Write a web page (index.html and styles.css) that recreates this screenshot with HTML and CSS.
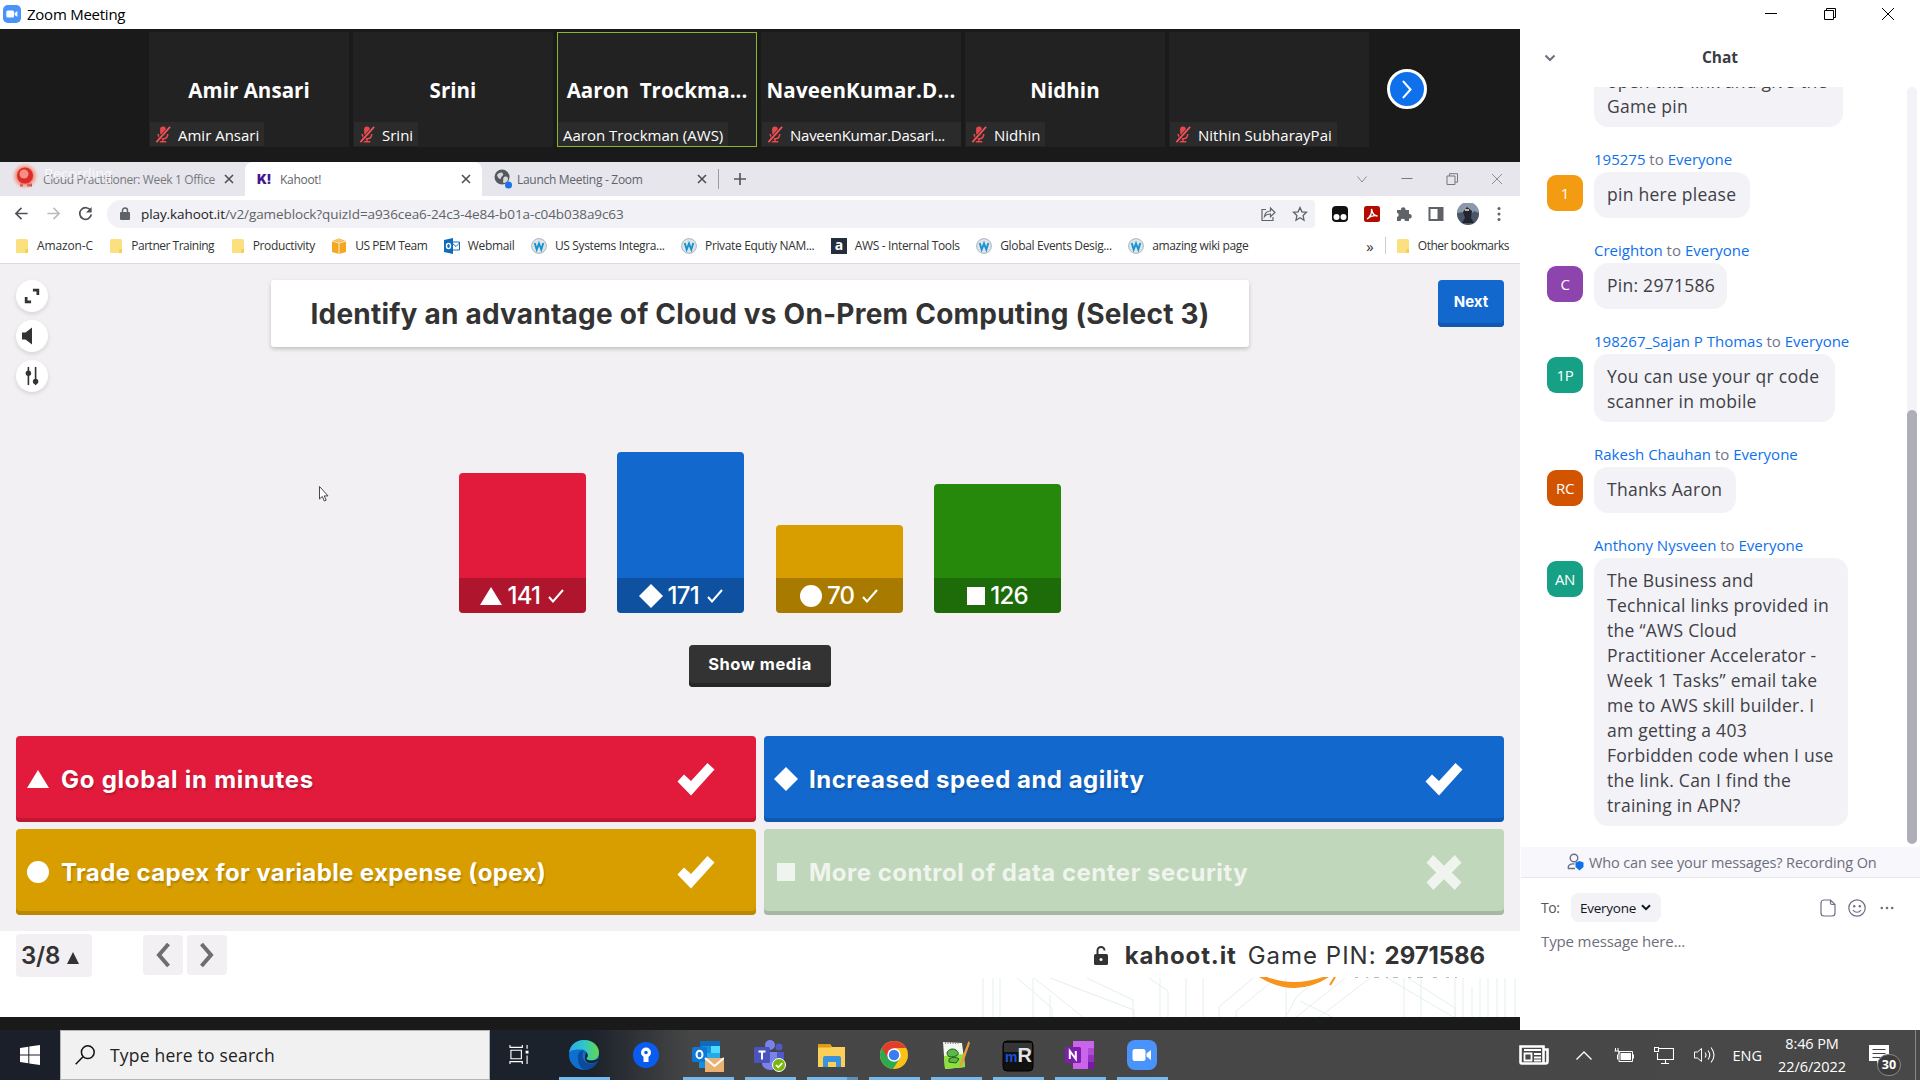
FILE: index.html
```html
<!DOCTYPE html>
<html lang="en">
<head>
<meta charset="utf-8">
<title>Zoom Meeting</title>
<link rel="stylesheet" href="styles.css">
</head>
<body>
<svg class="defs" aria-hidden="true">
  <defs>
    <symbol id="i-zoom" viewBox="0 0 30 30"><rect width="30" height="30" rx="8" fill="#4a93fb"/><rect x="5.500" y="9" width="13" height="12" rx="2.500" fill="#fff"/><path d="M19.500 13.500l4.500-3.500v10l-4.500-3.500z" fill="#fff"/></symbol>
    <symbol id="i-muted" viewBox="0 0 16 18"><rect x="5" y="0.500" width="6" height="10" rx="3" fill="#e8484b"/><path d="M3 8.500c0 3.500 2 5 5 5s5-1.500 5-5M8 13.500V16M4.500 16.700h7" fill="none" stroke="#e8484b" stroke-width="1.700"/><path d="M1 17L15.500 1" stroke="#2b2b2b" stroke-width="3.500"/><path d="M1 17L15.500 1" stroke="#ef5558" stroke-width="1.900"/></symbol>
    <symbol id="i-close" viewBox="0 0 12 12"><path d="M2 2l8 8M10 2l-8 8" stroke="currentColor" stroke-width="1.600" fill="none"/></symbol>
    <symbol id="i-folder" viewBox="0 0 14 16"><path d="M1 2.500A1.500 1.500 0 0 1 2.500 1h9A1.500 1.500 0 0 1 13 2.500V13l-1 2H1z" fill="#fbe080"/><path d="M10 15l.5-4H13v4z" fill="#f3cf57"/></symbol>
    <symbol id="i-wiki" viewBox="0 0 16 16"><circle cx="8" cy="8" r="7.400" fill="#dfe5e8" stroke="#a9b6bd"/><path d="M3.700 5l2 6.500L8 5.500l2.300 6L12.300 5" fill="none" stroke="#1793d1" stroke-width="1.900"/></symbol>
    <symbol id="i-check" viewBox="0 0 38 34"><path d="M0.500 19.500L7 12.500l7 6.500L30.500 1l7 6.500L14 33.500z" fill="#fff"/></symbol>
    <symbol id="i-tick" viewBox="0 0 16 14"><path d="M1 8l4 4.500L15 1" fill="none" stroke="#fff" stroke-width="2"/></symbol>
    <symbol id="i-triangle" viewBox="0 0 22 18"><path d="M11 0l11 18H0z" fill="#fff"/></symbol>
    <symbol id="i-diamond" viewBox="0 0 24 24"><path d="M12 0l12 12-12 12L0 12z" fill="#fff"/></symbol>
    <symbol id="i-circle" viewBox="0 0 22 22"><circle cx="11" cy="11" r="11" fill="#fff"/></symbol>
    <symbol id="i-square" viewBox="0 0 18 18"><path d="M0 0h18v18H0z" fill="#fff"/></symbol>
  </defs>
</svg>

<div class="screen">
  <header class="titlebar">
    <svg class="titlebar-logo"><use href="#i-zoom"/></svg>
    <span class="titlebar-text">Zoom Meeting</span>
    <div class="window-controls">
      <svg viewBox="0 0 12 12"><path d="M0 5.500h12" stroke="#000" fill="none"/></svg>
      <svg viewBox="0 0 12 12"><path d="M.5 2.500h9v9h-9zM2.500 2.500v-2h9v9h-2" stroke="#000" fill="none"/></svg>
      <svg viewBox="0 0 12 12"><path d="M0 0l12 12M12 0L0 12" stroke="#000" fill="none"/></svg>
    </div>
  </header>

  <div class="workspace">
    <main class="meeting">
      <section class="gallery">
        <div class="tile"><span class="tile-name">Amir Ansari</span><span class="tile-label"><svg><use href="#i-muted"/></svg><span>Amir Ansari</span></span></div>
        <div class="tile"><span class="tile-name">Srini</span><span class="tile-label"><svg><use href="#i-muted"/></svg><span>Srini</span></span></div>
        <div class="tile tile-active"><span class="tile-name">Aaron&nbsp; Trockma...</span><span class="tile-label"><span>Aaron Trockman (AWS)</span></span></div>
        <div class="tile"><span class="tile-name tile-name-long">NaveenKumar.D...</span><span class="tile-label tile-label-wide"><svg><use href="#i-muted"/></svg><span>NaveenKumar.Dasari...</span></span></div>
        <div class="tile"><span class="tile-name">Nidhin</span><span class="tile-label"><svg><use href="#i-muted"/></svg><span>Nidhin</span></span></div>
        <div class="tile"><span class="tile-label"><svg><use href="#i-muted"/></svg><span>Nithin SubharayPai</span></span></div>
        <button class="gallery-next"><svg viewBox="0 0 16 24"><path d="M4 3l8 9-8 9" fill="none" stroke="#fff" stroke-width="2.400" stroke-linecap="round"/></svg></button>
      </section>

      <section class="browser">
        <div class="tabs">
          <div class="tab tab-first">
            <svg class="rec-dot" viewBox="0 0 30 30"><defs><radialGradient id="glow"><stop offset=".5" stop-color="#f26a50"/><stop offset="1" stop-color="#f9c5b8" stop-opacity="0"/></radialGradient></defs><path d="M10 23h3m4 0h5" stroke="#a32334" stroke-width="3"/><circle cx="15" cy="14" r="14" fill="url(#glow)"/><circle cx="15" cy="13.500" r="8" fill="#dc2b2b"/><circle cx="14" cy="12" r="4.500" fill="#f49080"/></svg>
            <span class="tab-title">Cloud Practitioner: Week 1 Office</span>
            <span class="rec-text">Recording</span>
            <svg class="tab-close"><use href="#i-close"/></svg>
          </div>
          <div class="tab tab-current">
            <span class="k-logo">K!</span>
            <span class="tab-title">Kahoot!</span>
            <svg class="tab-close"><use href="#i-close"/></svg>
          </div>
          <div class="tab tab-last">
            <svg class="globe" viewBox="0 0 18 20"><circle cx="8" cy="8" r="7.500" fill="#55585c"/><path d="M3 6c3-3 5-3 6-1s-2 2-2 4-3 1-4-3zM10 8c3-1 4 0 4 2s-2 4-4 4 0-3-1-4z" fill="#d5d7da"/><circle cx="14.500" cy="16" r="3.500" fill="#1a73e8"/></svg>
            <span class="tab-title">Launch Meeting - Zoom</span>
            <svg class="tab-close"><use href="#i-close"/></svg>
          </div>
          <svg class="tab-add" viewBox="0 0 14 14"><path d="M7 1v12M1 7h12" stroke="#55585c" stroke-width="1.700"/></svg>
          <div class="browser-controls">
            <svg viewBox="0 0 12 12"><path d="M1.500 3.500L6 9l4.500-5.500" stroke="#8d8d93" fill="none"/></svg>
            <svg viewBox="0 0 12 12"><path d="M.5 5.500h11" stroke="#77777d" fill="none"/></svg>
            <svg viewBox="0 0 12 12"><path d="M1 3h8v8.500H1zM3.500 3V.700h8v8.500H9" stroke="#77777d" fill="none"/></svg>
            <svg viewBox="0 0 12 12"><path d="M1 1l10 10M11 1L1 11" stroke="#8d8d93" fill="none"/></svg>
          </div>
        </div>

        <div class="toolbar">
          <svg class="nav-icon" viewBox="0 0 16 16"><path d="M14.500 8H2M8 2L2 8l6 6" fill="none" stroke="#4d5054" stroke-width="1.700"/></svg>
          <svg class="nav-icon" viewBox="0 0 16 16"><path d="M1.500 8H14M8 2l6 6-6 6" fill="none" stroke="#b9bbbf" stroke-width="1.700"/></svg>
          <svg class="nav-icon" viewBox="0 0 16 16"><path d="M13.500 5A6.200 6.200 0 1 0 14.200 9" fill="none" stroke="#4d5054" stroke-width="1.800"/><path d="M14.500 1v6h-6z" fill="#4d5054"/></svg>
          <div class="omnibox">
            <svg class="lock" viewBox="0 0 10 13"><rect y="5" width="10" height="8" rx="1" fill="#5f6368"/><path d="M2.500 5V3.500a2.500 2.500 0 0 1 5 0V5" fill="none" stroke="#5f6368" stroke-width="1.500"/></svg>
            <span class="url"><b>play.kahoot.it</b>/v2/gameblock?quizId=a936cea6-24c3-4e84-b01a-c04b038a9c63</span>
            <svg class="omni-icon" viewBox="0 0 16 16"><path d="M6 3.500H2v11h11V11M4.500 10.500c.5-4 3-5.500 6-5.500V2l4.500 4.500-4.500 4.300V8c-2.500 0-4.500.5-6 2.500z" fill="none" stroke="#5f6368" stroke-width="1.200"/></svg>
            <svg class="omni-icon" viewBox="0 0 16 16"><path d="M8 1.500l1.900 4.300 4.600.5-3.400 3.200.9 4.700L8 11.800l-4 2.400.9-4.700L1.500 6.300l4.600-.5z" fill="none" stroke="#5f6368" stroke-width="1.300"/></svg>
          </div>
          <div class="extensions">
            <svg viewBox="0 0 18 18"><rect x="1" y="1" width="16" height="16" rx="4" fill="#111"/><circle cx="5.500" cy="12" r="3" fill="#fff"/><circle cx="12.500" cy="12" r="3" fill="#fff"/></svg>
            <svg viewBox="0 0 18 18"><rect x="1" y="1" width="16" height="16" rx="2.500" fill="#b30b00"/><path d="M4 14c3-2 5-6 4.500-10 1 5 3 7 6 7-4-1-7 0-10.500 3z" fill="none" stroke="#fff" stroke-width="1.300"/></svg>
            <svg viewBox="0 0 18 18"><path d="M2 5h4a2.300 2.300 0 1 1 4.500 0H14v4a2.300 2.300 0 1 1 0 4.500V16h-4a2.200 2.200 0 0 0-4.400 0H2v-4a2.200 2.200 0 0 0 0-4.300z" fill="#5f6368"/></svg>
            <svg viewBox="0 0 18 18"><path d="M2.500 3h13v12h-13z" fill="none" stroke="#5f6368" stroke-width="2"/><path d="M10.500 3h5v12h-5z" fill="#5f6368"/></svg>
            <svg class="avatar-photo" viewBox="0 0 22 22"><circle cx="11" cy="11" r="11" fill="#4a5568"/><path d="M0 10a11 11 0 0 1 22 0l-5-2-4 4-6-3z" fill="#8c99ad"/><path d="M6 9l4-5 5 4-1 7 3 5H5l3-5z" fill="#20242e"/><path d="M8 6h4v2H8z" fill="#c8b49a"/></svg>
            <svg viewBox="0 0 18 18"><circle cx="9" cy="3.500" r="1.500" fill="#5f6368"/><circle cx="9" cy="9" r="1.500" fill="#5f6368"/><circle cx="9" cy="14.500" r="1.500" fill="#5f6368"/></svg>
          </div>
        </div>

        <div class="bookmarks">
          <span class="bm bm-f bm-loose"><svg><use href="#i-folder"/></svg><span>Amazon-C</span></span>
          <span class="bm bm-f bm-tight"><svg><use href="#i-folder"/></svg><span>Partner Training</span></span>
          <span class="bm bm-f"><svg><use href="#i-folder"/></svg><span>Productivity</span></span>
          <span class="bm bm-tight"><svg viewBox="0 0 16 16"><path d="M1 3l7-2.500L15 3v11l-7 2-7-2z" fill="#f5a623"/><path d="M1 3l7 2 7-2M8 5v11" stroke="#fff" fill="none" stroke-width=".8"/><path d="M3 2.500l5-2 5 2-5 1.500z" fill="#f9c66a"/></svg><span>US PEM Team</span></span>
          <span class="bm"><svg viewBox="0 0 16 16"><path d="M8 4h7.500v8H8zM8 5l4 3.500L15.500 5" fill="#fff" stroke="#0f6cbd"/><path d="M0 2l9-2v16l-9-2z" fill="#0f6cbd"/><ellipse cx="4.500" cy="8" rx="2" ry="2.600" fill="none" stroke="#fff" stroke-width="1.400"/></svg><span>Webmail</span></span>
          <span class="bm"><svg><use href="#i-wiki"/></svg><span>US Systems Integra...</span></span>
          <span class="bm"><svg><use href="#i-wiki"/></svg><span>Private Equtiy NAM...</span></span>
          <span class="bm"><span class="a-logo">a</span><span>AWS - Internal Tools</span></span>
          <span class="bm"><svg><use href="#i-wiki"/></svg><span>Global Events Desig...</span></span>
          <span class="bm"><svg><use href="#i-wiki"/></svg><span>amazing wiki page</span></span>
          <span class="bm-more">»</span>
          <span class="bm bm-f bm-tight bm-other"><svg><use href="#i-folder"/></svg><span>Other bookmarks</span></span>
        </div>

        <div class="kahoot">
          <div class="k-top">
            <div class="k-tools">
              <button><svg viewBox="0 0 20 20"><path d="M11 3.500h5.500V9M9 16.500H3.500V11" fill="none" stroke="#333" stroke-width="3"/></svg></button>
              <button><svg class="k-sound" viewBox="0 0 20 20"><path d="M0 6.500h3.500L10 1.500v17l-6.500-5H0z" fill="#333"/></svg></button>
              <button><svg viewBox="0 0 20 20"><path d="M6 0v20M14 0v20" stroke="#333" stroke-width="1.800"/><circle cx="6" cy="7" r="3" fill="#333"/><circle cx="14" cy="16" r="3" fill="#333"/></svg></button>
            </div>
            <h1 class="question">Identify an advantage of Cloud vs On-Prem Computing (Select 3)</h1>
            <button class="next-btn">Next</button>
          </div>
          <div class="chart">
            <svg class="cursor" viewBox="0 0 10 16"><path d="M.5.500v12.500l2.800-2.500 2 4.500 1.900-.9-2-4.200h3.800z" fill="#fff" stroke="#333" stroke-width=".9"/></svg>
            <div class="bar red" style="height:140px"><div class="bar-foot"><svg class="s-tri"><use href="#i-triangle"/></svg><span>141</span><svg class="s-tick"><use href="#i-tick"/></svg></div></div>
            <div class="bar blue" style="height:161px"><div class="bar-foot"><svg class="s-dia"><use href="#i-diamond"/></svg><span>171</span><svg class="s-tick"><use href="#i-tick"/></svg></div></div>
            <div class="bar yellow" style="height:88px"><div class="bar-foot"><svg class="s-cir"><use href="#i-circle"/></svg><span>70</span><svg class="s-tick"><use href="#i-tick"/></svg></div></div>
            <div class="bar green" style="height:129px"><div class="bar-foot"><svg class="s-sq"><use href="#i-square"/></svg><span>126</span></div></div>
          </div>
          <div class="media-row"><button class="media-btn">Show media</button></div>
          <div class="answers">
            <div class="answer red"><svg class="shape s-tri"><use href="#i-triangle"/></svg><span class="answer-wide">Go global in minutes</span><svg class="mark"><use href="#i-check"/></svg></div>
            <div class="answer blue"><svg class="shape s-dia"><use href="#i-diamond"/></svg><span>Increased speed and agility</span><svg class="mark"><use href="#i-check"/></svg></div>
            <div class="answer yellow"><svg class="shape s-cir"><use href="#i-circle"/></svg><span class="answer-narrow">Trade capex for variable expense (opex)</span><svg class="mark"><use href="#i-check"/></svg></div>
            <div class="answer faded"><svg class="shape s-sq"><use href="#i-square"/></svg><span>More control of data center security</span><svg class="mark mark-cross" viewBox="0 0 38 38"><path d="M8 1l11 11L30 1l7 8-10 10 10 10-7 8-11-11L8 37l-7-8 10-10L1 9z" fill="#fff"/></svg></div>
          </div>
        </div>

        <footer class="k-footer">
          <div class="k-count"><span>3/8</span><svg viewBox="0 0 12 12"><path d="M6 0l6 12H0z" fill="#333"/></svg></div>
          <div class="k-nav"><svg viewBox="0 0 16 26"><path d="M13.500 2L4 13l9.500 11" fill="none" stroke="#6e6e6e" stroke-width="4"/></svg></div>
          <div class="k-nav"><svg viewBox="0 0 16 26"><path d="M2.500 2L12 13 2.500 24" fill="none" stroke="#6e6e6e" stroke-width="4"/></svg></div>
          <div class="k-pin">
            <svg viewBox="0 0 14 19"><rect y="8" width="14" height="11" rx="1.500" fill="#333"/><path d="M3.500 8V4.500a3.500 3.500 0 0 1 7 0" fill="none" stroke="#333" stroke-width="2"/><circle cx="7" cy="13.500" r="1.500" fill="#fff"/></svg>
            <b class="pin-site">kahoot.it</b><span class="pin-label">Game PIN:</span><b>2971586</b>
          </div>
        </footer>
        <svg class="slide-edge" viewBox="0 0 1520 40">
          <g fill="none" stroke="#e4efef"><path d="M983 1v40M993 1v40M1000 1v40M1017 1l35 30v10M1033 1v40M1050 18v23M1034 1l50 40M1050 1l84 32v8M1087 1l46 22v18M1149 1l19 13v27M1160 1v40M1186 1v40M1203 1v40M1219 41V30l34-29M1236 41V34l40-33M1286 1v40M1285 41l12-22 23-18M1345 1l-50 40M1370 1l-52 40M1387 1l68 40M1300 24l34 17M1408 1l47 30v10M1404 1v40M1421 1v40M1455 1v40M1463 1v40M1472 10v31M1480 1v40M1488 1v40M1497 1v40M1505 1v40M1515 1v40"/></g>
          <path d="M1259 0q36 22 70 0l-6 0q-30 10-56 0z" fill="#f7941e"/><path d="M1330 8l5-8" stroke="#f7941e" stroke-width="2"/>
          <path d="M1355 .5h3m8 0h2m6 0h5m7 0h2m5 0h5m10 0h3m6 0h6m10 0h4m9 0h3m6 0h2" stroke="#b9b9be"/>
        </svg>
      </section>
    </main>

    <aside class="chat">
      <div class="chat-head"><svg viewBox="0 0 12 8"><path d="M1.500 1.500L6 6l4.500-4.500" fill="none" stroke="#6e6e85" stroke-width="2"/></svg><span>Chat</span></div>
      <div class="chat-scroll">
        <div class="messages">
          <div class="msg msg-cut"><div class="bubble" style="width:249px">open this link and give the<br>Game pin</div></div>
          <div class="msg"><div class="from">195275 <i>to</i> Everyone</div><div class="ava orange">1</div><div class="bubble" style="width:156px">pin here please</div></div>
          <div class="msg"><div class="from">Creighton <i>to</i> Everyone</div><div class="ava purple">C</div><div class="bubble" style="width:133px">Pin: 2971586</div></div>
          <div class="msg"><div class="from">198267_Sajan P Thomas <i>to</i> Everyone</div><div class="ava teal">1P</div><div class="bubble" style="width:241px">You can use your qr code<br>scanner in mobile</div></div>
          <div class="msg"><div class="from">Rakesh Chauhan <i>to</i> Everyone</div><div class="ava rust">RC</div><div class="bubble" style="width:142px">Thanks Aaron</div></div>
          <div class="msg"><div class="from">Anthony Nysveen <i>to</i> Everyone</div><div class="ava teal">AN</div><div class="bubble" style="width:254px">The Business and<br>Technical links provided in<br>the “AWS Cloud<br>Practitioner Accelerator -<br>Week 1 Tasks” email take<br>me to AWS skill builder. I<br>am getting a 403<br>Forbidden code when I use<br>the link. Can I find the<br>training in APN?</div></div>
        </div>
        <div class="track"><div class="thumb"></div></div>
      </div>
      <div class="who"><svg viewBox="0 0 17 18"><circle cx="7" cy="5" r="3.800" fill="none" stroke="#6e6e85" stroke-width="1.400"/><path d="M8 15.500H1.500c-1-3 1.500-5 6-4.500" fill="none" stroke="#6e6e85" stroke-width="1.400"/><path d="M12.500 8l4 1.500v4.500l-4 3.500-4-3.500V9.500z" fill="#0e71eb"/></svg><span>Who can see your messages? Recording On</span></div>
      <div class="compose">
        <div class="to-row"><span class="to-label">To:</span><span class="to-pill"><span>Everyone</span><svg viewBox="0 0 10 7"><path d="M1 1.200l4 4 4-4" fill="none" stroke="#131619" stroke-width="2"/></svg></span>
          <svg class="c-file" viewBox="0 0 16 18"><path d="M10.500 1H4a3 3 0 0 0-3 3v10a3 3 0 0 0 3 3h8a3 3 0 0 0 3-3V5.500zM10.500 1v3a1.500 1.500 0 0 0 1.500 1.500h3" fill="none" stroke="#6e6e85" stroke-width="1.200"/></svg>
          <svg class="c-smile" viewBox="0 0 18 18"><circle cx="9" cy="9" r="8.200" fill="none" stroke="#6e6e85" stroke-width="1.200"/><circle cx="6.200" cy="7.300" r="1.200" fill="#6e6e85"/><circle cx="11.800" cy="7.300" r="1.200" fill="#6e6e85"/><path d="M5 11c2 3 6 3 8 0" fill="none" stroke="#6e6e85" stroke-width="1.200"/></svg>
          <svg class="c-dots" viewBox="0 0 14 4"><circle cx="1.800" cy="2" r="1.300" fill="#6e6e85"/><circle cx="7" cy="2" r="1.300" fill="#6e6e85"/><circle cx="12.200" cy="2" r="1.300" fill="#6e6e85"/></svg></div>
        <div class="placeholder">Type message here...</div>
      </div>
    </aside>
  </div>

  <footer class="taskbar">
    <div class="start"><svg viewBox="0 0 20 20"><path d="M0 3l8.300-1.200v7.700H0zM9.300 1.600L20 0v9.500H9.300zM0 10.500h8.300v7.800L0 17zM9.300 10.500H20V20L9.300 18.400z" fill="#fff"/></svg></div>
    <div class="search"><svg viewBox="0 0 20 20"><circle cx="12.800" cy="7.200" r="6.400" fill="none" stroke="#111" stroke-width="1.500"/><path d="M8 11.800L.7 19.300" stroke="#111" stroke-width="1.500"/></svg><span>Type here to search</span></div>
    <div class="taskview"><svg viewBox="0 0 20 20"><path d="M1.500 5.500h11v9h-11zM.5 0v2.500h13V0M.5 20v-2.500h13V20M18.500 0v4M18.500 11v9" fill="none" stroke="#fff" stroke-width="1.200"/><path d="M17 6h3v3h-3z" fill="#fff"/></svg></div>
    <div class="apps">
      <div class="app run"><svg viewBox="0 0 30 30"><defs><linearGradient id="ed" x1="0" x2="1"><stop stop-color="#2ba8ec"/><stop offset=".5" stop-color="#2fc7c9"/><stop offset="1" stop-color="#62d94a"/></linearGradient></defs><circle cx="15" cy="15" r="15" fill="#0f6fd0"/><path d="M0 13C1 5 7 0 15 0c9 0 15 6 15 12.500 0 5-4 8-8 8-3 0-5-1-5-2.500 2-2 2-8-4-8.500C7 9 1 10 0 13z" fill="url(#ed)"/><path d="M9 19c-1-6 4-9.500 6-8.500-3 3-2 12 5 13 4 .5 7-1 8-2C25 28 20 30 16 30c-4-1-7-6-7-11z" fill="#0c4a9a"/><path d="M17 12c3 3 2 5 .3 6.200.7 2.300 4 2.300 6 2.200 3 0 5.500-1.200 6.400-3-.3 2-.7 3-1.700 4-5 3-13 2-12-5z" fill="#1b222c"/></svg></div>
      <div class="app"><svg viewBox="0 0 30 30"><circle cx="15" cy="15" r="13" fill="#0a5cf0"/><circle cx="15" cy="12.500" r="5" fill="#fff"/><path d="M12.500 15h5v7h-5z" fill="#fff"/><circle cx="15" cy="12.500" r="1.800" fill="#0a5cf0"/></svg></div>
      <div class="app run"><svg class="wide" viewBox="0 0 32 32"><path d="M8 1h20v18H8z" fill="#0f6cbd"/><path d="M10 6h9v7h-9z" fill="#1490df"/><path d="M19 6h9v7h-9z" fill="#50d9ff"/><path d="M8 13h20v10H8z" fill="#28a8ea"/><path d="M7 19h14v9H7z" fill="#1490df"/><rect y="7" width="15" height="15" rx="1.500" fill="#0f78d4"/><ellipse cx="7.500" cy="14.500" rx="3" ry="3.700" fill="none" stroke="#fff" stroke-width="2"/><path d="M13 18h19v14H13z" fill="#e8b272"/><path d="M13 18l9.500 8L32 18" stroke="#fff" stroke-width="2" fill="none"/></svg></div>
      <div class="app run"><svg class="wide" viewBox="0 0 32 32"><circle cx="16" cy="5" r="5" fill="#7b83eb"/><circle cx="25" cy="7" r="3.500" fill="#5059c9"/><path d="M20 12h10v9c0 4-3 6-6 6z" fill="#5059c9"/><path d="M8 12h15v11c0 5-3 7-7 7s-8-3-8-7z" fill="#7b83eb"/><rect y="7" width="16" height="16" rx="1.500" fill="#4b53bc"/><path d="M4.500 11.500h7M8 11.500v8" stroke="#fff" stroke-width="2"/><circle cx="25" cy="25" r="6.500" fill="#78b80c" stroke="#fff"/><path d="M22 25l2.300 2.300L28.300 23" stroke="#fff" stroke-width="1.700" fill="none"/></svg></div>
      <div class="app run run-split"><svg viewBox="0 0 30 30"><path d="M1 4h12l2 3h13v20H1z" fill="#fccf58"/><path d="M1 4h11.500l2 3.500H1z" fill="#e09a10"/><path d="M6 27V18a2 2 0 0 1 2-2h14a2 2 0 0 1 2 2v9h-5v-5h-8v5z" fill="#3a92dc"/></svg></div>
      <div class="app run"><svg viewBox="0 0 30 30"><circle cx="15" cy="15" r="14" fill="#fbc116"/><path d="M15 15L2.900 8A14 14 0 0 0 14 29l7-11z" fill="#2da94f"/><path d="M2.900 8A14 14 0 0 1 27.100 8H15L8.900 18z" fill="#e33b2e"/><circle cx="15" cy="15" r="6.700" fill="#fff"/><circle cx="15" cy="15" r="5.200" fill="#3b7df0"/></svg></div>
      <div class="app run"><svg viewBox="0 0 30 30"><path d="M2 2l19 1 3 24-20 2z" fill="#f4f6f0"/><path d="M3 16l20-2 1 13-20 2z" fill="#8ee03a"/><path d="M6 13c1-4 6-5 9-3s3 5 0 6-9 2-9-3zM8 19c3-2 8-2 10 0l-3 4-7-1z" fill="#5cb84a" stroke="#25581e"/><path d="M27.500 1L18 26l3 0L29 3z" fill="#e9a23b"/><path d="M4 3h15" stroke="#888" stroke-width="2" stroke-dasharray="1 1.500"/></svg></div>
      <div class="app run"><svg class="wide" viewBox="0 0 32 32"><rect x="1" y="1" width="30" height="30" rx="4" fill="#111" stroke="#000"/><path d="M2 3h28v9H2z" fill="#353535"/><text x="3" y="22" class="mr-m">m</text><text x="15.500" y="22" class="mr-r">R</text></svg></div>
      <div class="app run"><svg viewBox="0 0 30 30"><path d="M8 1h21v28H8z" fill="#ca64ea"/><path d="M23 8h6v7h-6z" fill="#ae4bd5"/><path d="M23 15h6v7h-6z" fill="#9332bf"/><path d="M23 22h6v7h-6z" fill="#7719aa"/><rect y="7" width="16" height="16" rx="1.500" fill="#7f1dae"/><path d="M4.800 19v-8l6 8v-8" stroke="#fff" stroke-width="2" fill="none"/></svg></div>
      <div class="app run"><svg viewBox="0 0 30 30"><use href="#i-zoom"/></svg></div>
    </div>
    <div class="tray">
      <svg class="t-news" viewBox="0 0 30 20"><path d="M1.500 1.500h23v17h-22q-1 0-1-1zM24.500 4.500h4v12q0 2-2 2h-4" fill="none" stroke="#fff" stroke-width="2.600"/><path d="M5.500 8.500h7v7h-7zM5 5h17M15 9h7M15 12.500h7M15 15.500h7" fill="none" stroke="#fff" stroke-width="1.800"/></svg>
      <svg class="t-up" viewBox="0 0 16 9"><path d="M.5 8.500L8 1l7.500 7.500" fill="none" stroke="#fff" stroke-width="1.300"/></svg>
      <svg class="t-bat" viewBox="0 0 20 14"><path d="M5 3.500h13.500v10H5z" fill="none" stroke="#fff"/><path d="M6.500 5h10.500v7H6.500zM18.500 6.500H20v4h-1.500z" fill="#fff"/><path d="M1.500 0v3M4 0v3M.5 3h4.500v2.500L3.500 7v4.500" fill="none" stroke="#fff"/></svg>
      <svg class="t-mon" viewBox="0 0 20 17"><path d="M5 1.500h14.500v11H3.500V6M.5.500h4v4h-4zM11.500 12.500v3.500M7 16.500h8" fill="none" stroke="#fff" stroke-width="1.100"/></svg>
      <svg class="t-vol" viewBox="0 0 21 18"><path d="M.5 6h3L7.500 2.500v13L3.500 12h-3z" fill="none" stroke="#fff"/><path d="M11 6.500q2 2.500 0 5M14 4.500q3.500 4.500 0 9M17 1.500q6 7.500 0 15" fill="none" stroke="#fff" stroke-width="1.100"/></svg>
      <span class="t-eng">ENG</span>
      <span class="t-clock"><span>8:46 PM</span><span>22/6/2022</span></span>
      <span class="t-note"><svg viewBox="0 0 20 18"><path d="M0 0h20v16h-8l-4 4V16H0z" fill="#fff"/><path d="M3.500 4.500h13M3.500 8.500h13M3.500 12.500h8" stroke="#444"/></svg><b>30</b></span>
    </div>
  </footer>
</div>
</body>
</html>
```
FILE: styles.css
```css
* { box-sizing: border-box; }
body { margin: 0; font-family: "Open Sans", "Noto Sans", sans-serif; color: #222; overflow: hidden; }
button { border: 0; padding: 0; font: inherit; }
svg { display: block; flex: none; }
.defs { position: absolute; width: 0; height: 0; }
.screen { width: 1920px; height: 1080px; display: flex; flex-direction: column; background: #fff; }

.titlebar { height: 29px; display: flex; align-items: center; padding: 0 26px 2px 3px; }
.titlebar-logo { width: 18px; height: 18px; }
.titlebar-text { margin-left: 6px; font-size: 15px; letter-spacing: -.25px; color: #000; }
.window-controls { margin-left: auto; display: flex; gap: 46.500px; }
.window-controls svg { width: 12px; height: 12px; }

.workspace { height: 1001px; display: flex; }
.meeting { width: 1520px; background: #1a1a1a; }

.gallery { height: 133px; padding: 3px 0 0 149px; display: flex; gap: 4px; }
.tile { width: 200px; height: 115px; background: #222; display: flex; position: relative; justify-content: center; align-items: center; border: 1px solid transparent; }
.tile-active { border-color: #86b82b; }
.tile-name { color: #fff; font-weight: 700; font-size: 20.500px; letter-spacing: .05px; white-space: nowrap; }
.tile-name-long { letter-spacing: .2px; }
.tile-label { position: absolute; left: 0; bottom: 0; height: 24px; padding: 1px 5px 0; display: flex; align-items: center; background: #2b2b2b; color: #fff; font-size: 15px; white-space: nowrap; }
.tile-label svg { width: 16px; height: 17px; margin-right: 7px; }
.tile-label-wide { width: 199px; letter-spacing: -.25px; }
.gallery-next { width: 40px; height: 40px; margin: 37px 0 0 14px; border-radius: 50%; border: 3px solid #fff; background: #0e71eb; display: grid; place-items: center; }
.gallery-next svg { width: 14px; height: 21px; }

.tabs { height: 34px; background: #e7e6ed; display: flex; align-items: center; color: #5f6368; font-size: 12px; letter-spacing: -.3px; }
.tab { height: 34px; display: flex; align-items: center; position: relative; white-space: nowrap; }
.tab-close { width: 12px; height: 12px; margin-left: auto; color: #4d5054; }
.tab-first { width: 245px; padding: 0 10px; }
.tab-first .tab-title { margin-left: 3px; color: #77797e; letter-spacing: -.37px; }
.rec-dot { width: 30px; height: 30px; margin-top: -4px; }
.rec-text { position: absolute; left: 44px; top: 1px; font-size: 15px; letter-spacing: -.3px; color: #fff; opacity: .75; }
.tab-current { width: 237px; padding: 0 10px 0 12px; background: #fff; border-radius: 8px 8px 0 0; }
.k-logo { width: 16px; font: 900 13px/16px Inter, sans-serif; color: #46178f; }
.tab-current .tab-title { margin-left: 7px; }
.tab-last { width: 237px; padding: 0 10px 0 12px; border-right: 1px solid #9b9ba1; height: 20px; }
.globe { width: 18px; height: 20px; }
.tab-last .tab-title { margin-left: 5px; }
.tab-add { width: 14px; height: 14px; margin-left: 14px; }
.browser-controls { margin-left: auto; padding-right: 17px; display: flex; gap: 33px; }
.browser-controls svg { width: 12px; height: 12px; }

.toolbar { height: 36px; background: #fff; display: flex; align-items: center; padding: 0 0 1px 14px; }
.nav-icon { width: 15px; height: 15px; margin-right: 17px; }
.omnibox { width: 1208px; height: 28px; margin-left: -3px; border-radius: 14px 4px 4px 14px; background: #f1f1f6; display: flex; align-items: center; padding: 0 7px 0 13px; }
.lock { width: 10px; height: 13px; margin-right: 11px; }
.url { font-size: 13.500px; letter-spacing: -.09px; color: #5f6368; margin-right: auto; white-space: nowrap; }
.url b { font-weight: 400; color: #202124; }
.omni-icon { width: 16px; height: 16px; margin-left: 16px; }
.extensions { display: flex; align-items: center; gap: 14px; margin-left: 16px; }
.extensions svg { width: 18px; height: 18px; }
.extensions .avatar-photo { width: 22px; height: 22px; margin: 0 -2px; }
.extensions svg:last-child { margin-left: -1px; }

.bookmarks { height: 32px; background: #fff; border-bottom: 1px solid #dcdce0; display: flex; align-items: center; padding: 0 11px 4px 15px; gap: 16.500px; color: #333; font-size: 12px; letter-spacing: -.35px; white-space: nowrap; }
.bm { display: flex; align-items: center; gap: 8px; }
.bm svg { width: 16px; height: 16px; }
.bm-f svg { width: 14px; }
.bm-loose { letter-spacing: -.15px; }
.bm-tight { letter-spacing: -.49px; }
.a-logo { width: 16px; height: 16px; background: #232f3e; color: #fff; font: 700 14px/14px "Open Sans", sans-serif; text-align: center; }
.bm-more { margin-left: auto; font-size: 15px; }
.bm-other { padding-left: 10px; margin-left: -5px; border-left: 1px solid #ccc; }

.kahoot { height: 667px; background: #f2f0f3; padding: 16px 16px 0; font-family: Inter, "Open Sans", sans-serif; }
.k-top { display: flex; align-items: flex-start; height: 172px; }
.k-tools { width: 255px; display: flex; flex-direction: column; gap: 8px; }
.k-tools button { width: 32px; height: 32px; border-radius: 50%; background: #fff; box-shadow: 0 2px 4px rgba(0,0,0,.12); display: grid; place-items: center; }
.k-tools svg { width: 18px; height: 18px; }
.k-tools .k-sound { width: 20px; height: 20px; }
.question { margin: 0; width: 978px; height: 67px; background: #fff; border-radius: 3px; box-shadow: 0 2px 4px rgba(0,0,0,.2); font-size: 28px; font-weight: 700; letter-spacing: .22px; color: #333; display: grid; place-items: center; white-space: nowrap; }
.next-btn { width: 66px; height: 47px; margin-left: auto; border-radius: 4px; background: #1368ce; box-shadow: inset 0 -4px #1059af; color: #fff; font-size: 15px; font-weight: 700; padding-bottom: 5px; }
.chart { position: relative; height: 161px; display: flex; align-items: flex-end; justify-content: center; gap: 31.400px; }
.cursor { position: absolute; left: 303px; top: 34px; width: 10px; height: 16px; }
.bar { width: 127px; border-radius: 4px; overflow: hidden; display: flex; flex-direction: column; justify-content: flex-end; }
.bar-foot { height: 35px; background: rgba(0,0,0,.22); color: #fff; font-size: 24px; font-weight: 500; letter-spacing: -.7px; display: flex; align-items: center; justify-content: center; gap: 5px; }
.red { background: #e21b3c; }
.blue { background: #1368ce; }
.yellow { background: #d89e00; }
.green { background: #26890c; }
.s-tri { width: 22px; height: 18px; }
.s-dia { width: 24px; height: 24px; }
.s-cir { width: 22px; height: 22px; }
.s-sq { width: 18px; height: 18px; }
.s-tick { width: 16px; height: 14px; margin-left: 3px; }
.media-row { display: flex; justify-content: center; padding-top: 32px; height: 123px; }
.media-btn { width: 142px; height: 42px; border-radius: 4px; background: #333; box-shadow: inset 0 -4px #262626; color: #fff; font-size: 16.500px; font-weight: 700; letter-spacing: .55px; padding-bottom: 5px; }
.answers { display: grid; grid-template-columns: 740px 740px; grid-auto-rows: 86px; gap: 7px 8px; }
.answer { border-radius: 4px; box-shadow: inset 0 -4px rgba(0,0,0,.14); color: #fff; font-size: 24px; font-weight: 700; letter-spacing: .5px; text-shadow: 1px 2px 2px rgba(0,0,0,.2); display: grid; grid-template-columns: 45px 1fr 120px; align-items: center; white-space: nowrap; }
.answer-wide { letter-spacing: .75px; }
.answer-narrow { letter-spacing: .38px; }
.shape { justify-self: center; margin-right: 1px; }
.mark { width: 38px; height: 34px; justify-self: center; }
.mark-cross { height: 37px; }
.faded { background: #c1d7bb; color: rgba(255,255,255,.75); text-shadow: none; }
.faded svg { opacity: .75; }

.k-footer { height: 46px; background: #fff; display: flex; align-items: center; padding: 2px 35px 0 16px; font-family: Inter, sans-serif; color: #333; }
.k-count { width: 76px; height: 43px; background: #f2f0f3; border-radius: 4px; display: flex; align-items: center; gap: 7px; padding-left: 5px; font-size: 24px; font-weight: 600; letter-spacing: -.2px; margin-right: 51px; }
.k-count svg { width: 12px; height: 12px; margin-top: 6px; }
.k-nav { width: 40px; height: 40px; background: #f2f0f3; border-radius: 4px; display: grid; place-items: center; margin-right: 4px; }
.k-nav svg { width: 16px; height: 26px; }
.k-pin { margin-left: auto; display: flex; align-items: center; font-size: 24px; white-space: nowrap; }
.k-pin b { font-weight: 700; letter-spacing: -.1px; }
.k-pin .pin-site { letter-spacing: .85px; }
.k-pin svg { width: 14px; height: 19px; margin-right: 17px; }
.pin-label { margin: 0 8px 0 11px; letter-spacing: 1px; }
.slide-edge { width: 1520px; height: 40px; background: #fff; }

.chat { width: 400px; background: #fff; display: flex; flex-direction: column; }
.chat-head { height: 58px; position: relative; text-align: center; font-weight: 700; font-size: 15.500px; line-height: 57px; color: #3c3c43; }
.chat-head svg { position: absolute; left: 24px; top: 25px; width: 12px; height: 8px; }
.chat-scroll { height: 760px; display: flex; justify-content: space-between; overflow: hidden; }
.messages { padding-left: 26px; color: #3f3f46; font-size: 17.500px; letter-spacing: .26px; line-height: 25px; }
.msg { display: grid; grid-template-columns: 48px auto; grid-template-rows: 24px auto; margin-bottom: 21px; white-space: nowrap; }
.msg-cut { margin-top: -52px; }
.from { grid-column: 2; font-size: 15px; letter-spacing: 0; line-height: 22px; color: #0e71eb; }
.from i { font-style: normal; color: #747487; }
.ava { grid-row: 2; width: 36px; height: 36px; margin: 3px 0 0 1px; border-radius: 9px; color: #fff; font-size: 15px; letter-spacing: -.3px; line-height: 36px; text-align: center; }
.bubble { grid-row: 2; grid-column: 2; min-height: 46px; padding: 10px 13px 8px; border-radius: 14px; background: #f2f2f7; justify-self: start; }
.orange { background: #f39c12; }
.purple { background: #8e44ad; }
.teal { background: #16a085; }
.rust { background: #d35400; }
.track { width: 10px; height: 757px; margin-right: 3px; border-radius: 5px; background: #f2f2f7; padding-top: 323px; }
.thumb { height: 434px; border-radius: 5px; background: #aeaeb8; }
.who { height: 31px; margin-left: 1px; background: #f7f7fc; border-bottom: 1px solid #e6e6ee; display: flex; align-items: center; padding-left: 46px; gap: 5px; font-size: 14.500px; letter-spacing: -.12px; color: #6e6e7c; white-space: nowrap; }
.who svg { width: 17px; height: 18px; }
.compose { padding: 15px 26px 0 21px; font-size: 15px; letter-spacing: -.13px; color: #6e6e7c; }
.to-row { display: flex; align-items: center; height: 29px; color: #555; }
.to-label { width: 18px; font-size: 14px; letter-spacing: -.5px; white-space: nowrap; }
.to-pill { width: 90px; height: 29px; margin: 0 auto 0 12px; border-radius: 8px; background: #f2f2f7; display: flex; align-items: center; gap: 5px; padding-left: 9px; font-size: 13.500px; letter-spacing: -.25px; color: #131619; }
.to-pill svg { width: 10px; height: 7px; }
.c-file { width: 16px; height: 18px; }
.c-smile { width: 18px; height: 18px; margin: 0 14px 0 12px; }
.c-dots { width: 14px; height: 4px; }
.placeholder { margin-top: 8px; line-height: 22px; }

.taskbar { height: 50px; display: flex; color: #fff; background: linear-gradient(90deg, #1b1f29 0, #1c222b 590px, #464646 690px, #484848 100%); }
.start { width: 60px; display: grid; place-items: center; }
.start svg { width: 20px; height: 20px; }
.search { width: 430px; background: #f1f1f1; border: 1px solid #b5b5b5; color: #222; display: flex; align-items: center; padding: 0 0 1px 14px; font-size: 17.500px; letter-spacing: .2px; }
.search svg { width: 20px; height: 20px; margin-right: 15px; }
.taskview { width: 63px; padding: 15px 0 0 19px; }
.taskview svg { width: 20px; height: 19px; }
.apps { display: flex; }
.app { width: 62px; padding: 0 5px; display: flex; flex-direction: column; align-items: center; padding-top: 10px; }
.app svg { width: 30px; height: 30px; }
.app .wide { width: 32px; height: 32px; }
.app.run { background: linear-gradient(#76b9ed, #76b9ed) center bottom / 51px 3px no-repeat; }
.app.run-split { background: linear-gradient(90deg, #76b9ed 40px, #5f8fb4 40px) center bottom / 51px 3px no-repeat; }
.mr-m { font: 700 14px "Liberation Sans", sans-serif; fill: #1f4fd8; }
.mr-r { font: 700 20px "Liberation Sans", sans-serif; fill: #e4e4e4; }
.tray { margin-left: auto; display: flex; align-items: center; font-size: 14.500px; }
.t-news { width: 30px; height: 20px; margin-right: 27px; }
.t-up { width: 16px; height: 9px; margin-right: 22px; }
.t-bat { width: 20px; height: 14px; margin-right: 20px; }
.t-mon { width: 20px; height: 17px; margin-right: 20px; }
.t-vol { width: 21px; height: 18px; margin-right: 17px; }
.t-eng { margin-right: 16px; }
.t-clock { width: 68px; margin-right: 23px; padding-bottom: 1px; display: flex; flex-direction: column; align-items: center; line-height: 23px; letter-spacing: -.1px; white-space: nowrap; }
.t-note { position: relative; width: 47px; height: 50px; padding-top: 15px; border-right: 1px solid #888; margin-right: 4px; }
.t-note svg { width: 20px; height: 18px; overflow: visible; }
.t-note b { position: absolute; left: 8px; top: 24px; width: 24px; height: 22px; border-radius: 11px; border: 1px solid #888; background: #3c3c3c; font-size: 12.500px; line-height: 20px; text-align: center; }
```
